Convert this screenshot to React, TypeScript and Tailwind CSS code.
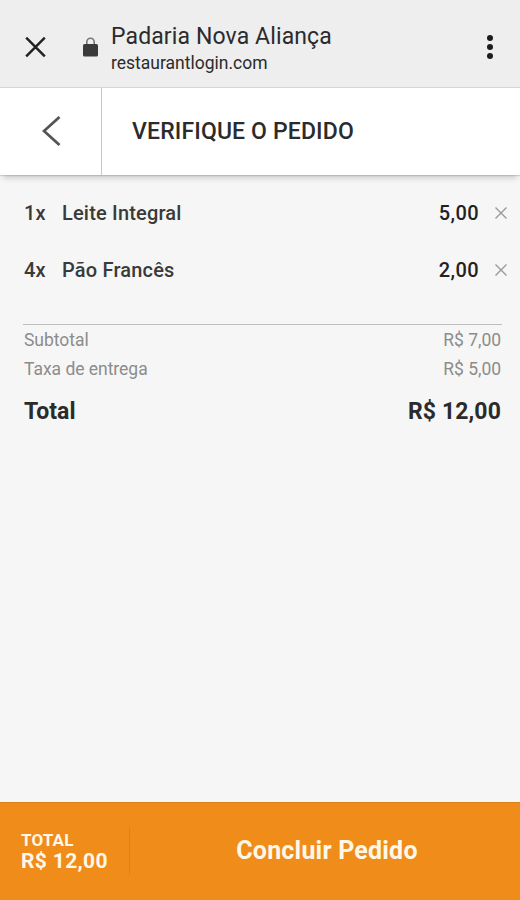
const items = [
    { id: 1, quantity: 1, name: "Leite Integral", price: "5,00" },
    { id: 2, quantity: 4, name: "Pão Francês", price: "2,00" },
]

const charges = [
    { id: 1, label: "Subtotal", value: "R$ 7,00" },
    { id: 2, label: "Taxa de entrega", value: "R$ 5,00" },
]

function BrowserBar() {
    return (
        <div className="flex h-[88px] shrink-0 items-center border-b border-[#d6d6d6] bg-[#eeeeee] pt-[7px]">
            <button aria-label="Fechar" className="ml-[25px]">
                <svg width="21" height="21" viewBox="0 0 21 21" fill="none" stroke="#222222" strokeWidth="2.5">
                    <path d="M1.2 .7 19.8 19.3M19.8 .7 1.2 19.3" />
                </svg>
            </button>
            <svg className="ml-[37px]" width="15" height="20" viewBox="0 0 15 20">
                <path d="M3.8 8V4.9a3.7 3.7 0 0 1 7.4 0V8" fill="none" stroke="#777777" strokeWidth="1.6" />
                <rect y="7" width="15" height="12.5" rx="1.6" fill="#3a3a3c" />
            </svg>
            <div className="ml-[13px] flex-1 pt-px">
                <p className="text-[23px] leading-[30px] tracking-[0.12px] text-[#2b2b2b]">Padaria Nova Aliança</p>
                <p className="text-[17.5px] leading-[22px] text-[#2b2b2b]">restaurantlogin.com</p>
            </div>
            <button aria-label="Menu" className="mr-[27px]">
                <svg width="6" height="24" viewBox="0 0 6 24" fill="#1c1c1c">
                    <circle cx="3" cy="3" r="3" />
                    <circle cx="3" cy="12" r="3" />
                    <circle cx="3" cy="21" r="3" />
                </svg>
            </button>
        </div>
    )
}

function PageHeader() {
    return (
        <div className="flex h-[87px] shrink-0 items-stretch bg-white shadow-[0_1px_1px_rgba(0,0,0,0.12),0_6px_6px_-3px_rgba(0,0,0,0.18)]">
            <button aria-label="Voltar" className="flex w-[102px] items-center border-r border-[#c8c8c8] pb-px pl-[42px]">
                <svg width="19" height="30" viewBox="0 0 19 30" fill="none" stroke="#555555" strokeWidth="2.8">
                    <path d="M17.5 1 2 15 17.5 29" />
                </svg>
            </button>
            <h1 className="flex items-center pt-0.5 pl-[30px] text-[23px] font-medium tracking-[0.15px] text-[#2b2b2b]">VERIFIQUE O PEDIDO</h1>
        </div>
    )
}

function OrderItems() {
    return (
        <ul className="flex flex-col gap-[27px] pt-[23px]">
            {items.map((item) => (
                <li key={item.id} className="flex items-center pr-[13px] pl-6 text-xl leading-[30px] font-medium tracking-[0.18px] text-[#3a3a3a]">
                    <span className="w-[38px]">{item.quantity}x</span>
                    <span className="flex-1">{item.name}</span>
                    <span className="tracking-[0.4px] text-[#222222]">{item.price}</span>
                    <button aria-label="Remover" className="ml-4">
                        <svg width="12" height="12" viewBox="0 0 12 12" fill="none" stroke="#999999" strokeWidth="1.4">
                            <path d="M.5 .5 11.5 11.5M11.5 .5 .5 11.5" />
                        </svg>
                    </button>
                </li>
            ))}
        </ul>
    )
}

function Summary() {
    return (
        <div className="mr-[18px] ml-[23px] mt-[39px] border-t border-[#bdbdbd] pt-px pl-px">
            {charges.map((charge) => (
                <div key={charge.id} className="flex justify-between pr-px text-[17.5px] leading-[29px] tracking-[-0.03px] text-[#8c8c8c]">
                    <span>{charge.label}</span>
                    <span>{charge.value}</span>
                </div>
            ))}
            <div className="mt-[13px] flex justify-between pr-px text-[23px] leading-[30px] font-bold text-[#2b2b2b]">
                <span>Total</span>
                <span className="tracking-[0.12px]">R$ 12,00</span>
            </div>
        </div>
    )
}

function CheckoutBar() {
    return (
        <div className="flex h-[98px] shrink-0 items-center border-t border-[#d9821c] bg-[#ef8c1a] pb-0.5 text-[#fff8e8]">
            <div className="flex h-12 w-[130px] flex-col justify-center border-r border-[#dd811a] pl-[21px] font-bold">
                <span className="text-[17px] leading-[21px] tracking-[0.15px]">TOTAL</span>
                <span className="text-[21px] leading-[21px] tracking-[0.35px]">R$ 12,00</span>
            </div>
            <button className="flex-1 pl-1 text-center text-[25px] font-bold tracking-[0.2px]">Concluir Pedido</button>
        </div>
    )
}

export default function App() {
    return (
        <div className="flex h-[900px] w-[520px] flex-col overflow-hidden bg-[#f6f6f6] font-['Roboto',sans-serif]">
            <BrowserBar />
            <PageHeader />
            <main className="flex-1">
                <OrderItems />
                <Summary />
            </main>
            <CheckoutBar />
        </div>
    )
}
